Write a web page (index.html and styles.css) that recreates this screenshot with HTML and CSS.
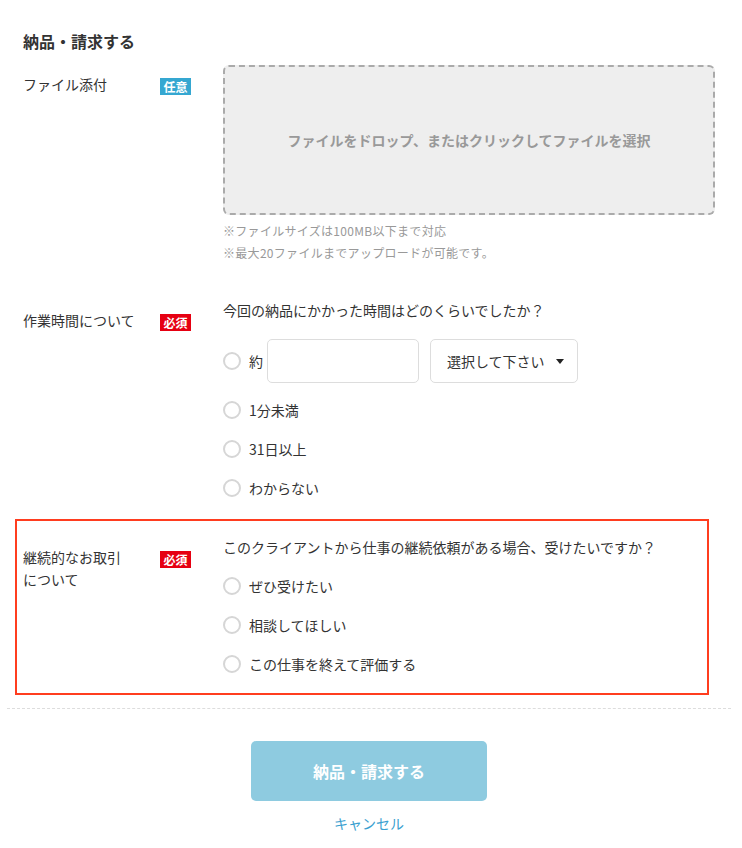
FILE: index.html
```html
<!DOCTYPE html>
<html lang="ja">
<head>
    <meta charset="UTF-8">
    <meta name="viewport" content="width=device-width, initial-scale=1.0">
    <title>納品・請求する</title>
    <link rel="stylesheet" href="styles.css">
</head>
<body>
    <div class="delivery-form">
        <h2 class="form-title">納品・請求する</h2>

        <div class="form-row row-file">
            <div class="row-label">ファイル添付</div>
            <div class="row-badge"><span class="badge badge-optional">任意</span></div>
            <div class="row-body">
                <div class="drop-area">ファイルをドロップ、またはクリックしてファイルを選択</div>
                <p class="hint">※ファイルサイズは100MB以下まで対応</p>
                <p class="hint">※最大20ファイルまでアップロードが可能です。</p>
            </div>
        </div>

        <div class="form-row row-time">
            <div class="row-label">作業時間について</div>
            <div class="row-badge"><span class="badge badge-required">必須</span></div>
            <div class="row-body">
                <p class="question">今回の納品にかかった時間はどのくらいでしたか？</p>
                <div class="time-input">
                    <span class="radio"></span>
                    <span class="radio-text">約</span>
                    <input type="text" class="text-field">
                    <div class="select-box">
                        <span>選択して下さい</span>
                        <svg viewBox="0 0 8 5" width="8" height="5"><polygon points="0 0 8 0 4 5" fill="#222"></polygon></svg>
                    </div>
                </div>
                <label class="radio-item first"><span class="radio"></span>1分未満</label>
                <label class="radio-item"><span class="radio"></span>31日以上</label>
                <label class="radio-item"><span class="radio"></span>わからない</label>
            </div>
        </div>

        <div class="form-row row-highlight">
            <div class="row-label">継続的なお取引<br>について</div>
            <div class="row-badge"><span class="badge badge-required">必須</span></div>
            <div class="row-body">
                <p class="question">このクライアントから仕事の継続依頼がある場合、受けたいですか？</p>
                <label class="radio-item"><span class="radio"></span>ぜひ受けたい</label>
                <label class="radio-item"><span class="radio"></span>相談してほしい</label>
                <label class="radio-item"><span class="radio"></span>この仕事を終えて評価する</label>
            </div>
        </div>

        <div class="form-actions">
            <button class="submit-btn">納品・請求する</button>
            <a href="#" class="cancel-link">キャンセル</a>
        </div>
    </div>
</body>
</html>
```

FILE: styles.css
```css
:root {
    --text-color: #333333;
    --light-text: #999999;
    --border-color: #dddddd;
    --blue: #35a7d1;
    --red: #e60012;
    --highlight: #ff3d1f;
}

* {
    margin: 0;
    padding: 0;
    box-sizing: border-box;
}

body {
    font-family: "Noto Sans CJK JP", "Noto Sans", sans-serif;
    color: var(--text-color);
    background-color: #ffffff;
    font-size: 14px;
    line-height: 22px;
}

.delivery-form {
    padding: 0 11px 0 7px;
}

.form-title {
    font-size: 16px;
    font-weight: 700;
    line-height: 24px;
    padding: 29px 0 0 16px;
}

.form-row {
    display: grid;
    grid-template-columns: 137px 63px 1fr;
    padding: 0 16px;
    margin-top: 12px;
}

.row-label {
    padding-top: 10px;
}

.row-badge {
    padding-top: 12px;
}

.row-file .row-label {
    padding-top: 8px;
}

.row-file .row-badge {
    padding-top: 10px;
}

.badge {
    display: inline-block;
    color: #ffffff;
    font-size: 12px;
    font-weight: 700;
    line-height: 17px;
    padding: 0 3.5px;
}

.badge-optional {
    background-color: var(--blue);
}

.badge-required {
    background-color: var(--red);
}

.drop-area {
    height: 150px;
    border: 2px dashed #aaaaaa;
    border-radius: 6px;
    background-color: #eeeeee;
    color: var(--light-text);
    font-weight: 700;
    display: flex;
    align-items: center;
    justify-content: center;
}

.hint {
    font-size: 12px;
    letter-spacing: 0.3px;
    color: var(--light-text);
}

.drop-area + .hint {
    margin-top: 5px;
}

.row-time {
    margin-top: 35px;
}

.time-input {
    display: flex;
    align-items: center;
    margin-top: 18px;
    height: 44px;
}

.radio {
    width: 18px;
    height: 18px;
    border: 2px solid #d6d6d6;
    border-radius: 50%;
    background-color: #ffffff;
    flex-shrink: 0;
}

.radio-text {
    margin-left: 8px;
}

.text-field {
    width: 152px;
    height: 44px;
    margin-left: 4px;
    border: 1px solid var(--border-color);
    border-radius: 5px;
    outline: none;
    font-size: 14px;
}

.select-box {
    width: 148px;
    height: 44px;
    margin-left: 11px;
    border: 1px solid var(--border-color);
    border-radius: 5px;
    display: flex;
    align-items: center;
    justify-content: space-between;
    padding: 0 13px 0 16px;
}

.radio-item {
    display: flex;
    align-items: center;
    gap: 8px;
    margin-top: 17px;
}

.radio-item.first {
    margin-top: 16px;
}

.row-highlight {
    margin: 20px 22px 0 8px;
    border: 2px solid var(--highlight);
    padding: 15px 0 18px 6px;
}

.form-actions {
    border-top: 1px dashed var(--border-color);
    margin-top: 13px;
    padding-top: 32px;
    display: flex;
    flex-direction: column;
    align-items: center;
}

.submit-btn {
    width: 236px;
    height: 60px;
    border: none;
    border-radius: 5px;
    background-color: #8ecbe0;
    color: #ffffff;
    font-family: inherit;
    font-size: 16px;
    font-weight: 700;
    cursor: pointer;
}

.cancel-link {
    margin-top: 11px;
    color: #3aa0d0;
    text-decoration: none;
}
```
